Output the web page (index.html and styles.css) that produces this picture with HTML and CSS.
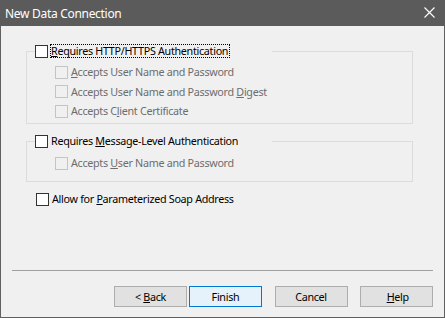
FILE: index.html
```html
<!DOCTYPE html>
<html>
<head>
<meta charset="utf-8">
<link rel="stylesheet" href="styles.css">
</head>
<body>
<div class="window">
  <div class="titlebar">
    <span class="title">New Data Connection</span>
    <svg class="close" width="11" height="11" viewBox="0 0 11 11"><path d="M0.5 0.5 L10.5 10.5 M10.5 0.5 L0.5 10.5" stroke="#ffffff" stroke-width="1.1" fill="none"/></svg>
  </div>
  <div class="content">
    <fieldset class="group g1">
      <legend class="legend">
        <div class="check"><span class="box"></span><span class="text focus"><u>R</u>equires HTTP/HTTPS Authentication</span></div>
      </legend>
      <div class="subs s1">
        <div class="check disabled"><span class="box"></span><span class="text"><u>A</u>ccepts User Name and Password</span></div>
        <div class="check disabled"><span class="box"></span><span class="text">Accepts User Name and Password <u>D</u>igest</span></div>
        <div class="check disabled"><span class="box"></span><span class="text">Accepts C<u>l</u>ient Certificate</span></div>
      </div>
    </fieldset>
    <fieldset class="group g2">
      <legend class="legend">
        <div class="check"><span class="box"></span><span class="text">Requires <u>M</u>essage-Level Authentication</span></div>
      </legend>
      <div class="subs s2">
        <div class="check disabled"><span class="box"></span><span class="text">Accepts <u>U</u>ser Name and Password</span></div>
      </div>
    </fieldset>
    <div class="check standalone"><span class="box"></span><span class="text">Allow for <u>P</u>arameterized Soap Address</span></div>
    <div class="footer">
      <div class="sep"></div>
      <div class="buttons">
        <button class="btn">&lt; <u>B</u>ack</button>
        <button class="btn default">Finish</button>
        <button class="btn gap">Cancel</button>
        <button class="btn gap">&nbsp;<u>H</u>elp</button>
      </div>
    </div>
  </div>
</div>
</body>
</html>
```
FILE: styles.css
```css
* { box-sizing: border-box; }
html, body { margin: 0; padding: 0; }
body {
  font-family: "Noto Sans", "Open Sans", sans-serif;
  font-size: 10.75px;
  letter-spacing: -0.3px;
  color: #000;
  background: #f0f0f0;
}
.window {
  width: 445px;
  height: 318px;
  border: 1px solid #606060;
  border-top: none;
  display: flex;
  flex-direction: column;
  background: #f0f0f0;
}
.titlebar {
  height: 26px;
  margin: 0 -1px;
  background: #5b5b5b;
  display: flex;
  align-items: center;
  justify-content: space-between;
  padding: 0 10px 0 5px;
  color: #fff;
}
.title {
  font-size: 12px;
  letter-spacing: -0.3px;
}
.close { display: block; margin-top: -1px; }
.content {
  flex: 1;
  display: flex;
  flex-direction: column;
}
.group {
  margin: 0 31px 0 25px;
  padding: 0 0 0 8px;
  border: 1px solid #dcdcdc;
  min-width: 0;
}
.g1 { margin-top: 18px; padding-bottom: 5px; }
.g2 { margin-top: 10px; padding-bottom: 11px; }
.legend {
  padding: 0;
  width: 237px;
  height: 14px;
}
.check {
  display: flex;
  align-items: center;
  gap: 2px;
  height: 14px;
  white-space: nowrap;
}
.box {
  width: 13px;
  height: 13px;
  flex: none;
  border: 1px solid #333333;
  background: #ffffff;
}
.text {
  line-height: 12px;
  border: 1px dotted transparent;
  padding: 0 1px 0 0;
}
.text.focus { border-color: #000; }
.subs {
  margin-left: 20px;
  display: flex;
  flex-direction: column;
  gap: 5.5px;
}
.s1 { padding-top: 7px; }
.s2 { padding-top: 8px; }
.disabled { color: #6d6d6d; }
.disabled .box {
  border-color: #c4c4c4;
  background: #f0f0f0;
}
.standalone {
  margin: 10px 0 0 35px;
}
.footer {
  margin-top: auto;
  padding: 0 11px 10px 11px;
}
.sep {
  height: 1px;
  background: #a0a0a0;
}
.buttons {
  margin-top: 15px;
  display: flex;
  justify-content: flex-end;
  gap: 2px;
}
.btn {
  width: 73px;
  height: 21px;
  padding: 0;
  font-family: inherit;
  font-size: 10.75px;
  letter-spacing: -0.3px;
  color: #000;
  background: #e1e1e1;
  border: 1px solid #adadad;
  border-radius: 0;
}
.btn.gap { margin-left: 10.5px; }
.btn.default {
  background: #e5f1fb;
  border-color: #0078d7;
}
u { text-decoration-thickness: 1px; text-underline-offset: 1px; }
```
